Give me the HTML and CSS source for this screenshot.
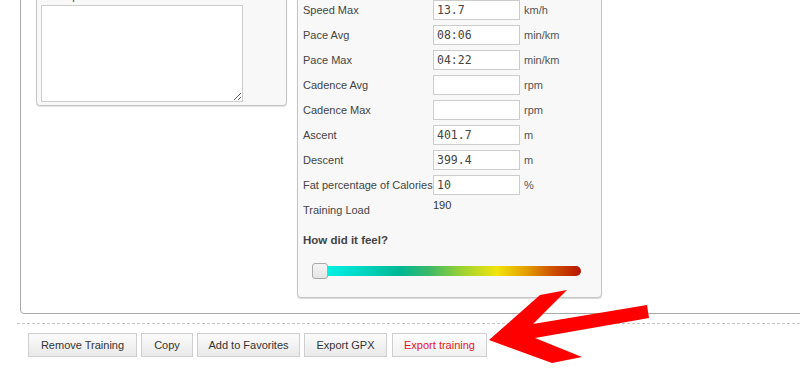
FILE: index.html
```html
<!DOCTYPE html>
<html>
<head>
<meta charset="utf-8">
<link rel="stylesheet" href="styles.css">
</head>
<body>
<div class="page">
  <div class="main">
    <div class="notes">
      <label class="notes-label">Description</label>
      <textarea class="notes-text"></textarea>
    </div>
    <div class="stats">
      <div class="row"><span class="lbl">Speed Max</span><input class="val" value="13.7"><span class="unit">km/h</span></div>
      <div class="row"><span class="lbl">Pace Avg</span><input class="val" value="08:06"><span class="unit">min/km</span></div>
      <div class="row"><span class="lbl">Pace Max</span><input class="val" value="04:22"><span class="unit">min/km</span></div>
      <div class="row"><span class="lbl">Cadence Avg</span><input class="val" value=""><span class="unit">rpm</span></div>
      <div class="row"><span class="lbl">Cadence Max</span><input class="val" value=""><span class="unit">rpm</span></div>
      <div class="row"><span class="lbl">Ascent</span><input class="val" value="401.7"><span class="unit">m</span></div>
      <div class="row"><span class="lbl">Descent</span><input class="val" value="399.4"><span class="unit">m</span></div>
      <div class="row"><span class="lbl">Fat percentage of Calories</span><input class="val" value="10"><span class="unit">%</span></div>
      <div class="row"><span class="lbl">Training Load</span><span class="static">190</span></div>
      <h4 class="feel">How did it feel?</h4>
      <div class="slider">
        <div class="track"></div>
        <div class="thumb"></div>
      </div>
    </div>
  </div>
  <div class="sep"></div>
  <div class="actions">
    <button class="btn btn-remove">Remove Training</button>
    <button class="btn btn-copy">Copy</button>
    <button class="btn btn-fav">Add to Favorites</button>
    <button class="btn btn-gpx">Export GPX</button>
    <button class="btn btn-red">Export training</button>
  </div>
</div>
<svg class="arrow" width="800" height="380" viewBox="0 0 800 380">
  <polygon fill="#ff0000" points="489,340 540,295 567,290 533,324 647,305 649,318 535,338 582,357 552,363"/>
</svg>
</body>
</html>
```

FILE: styles.css
```css
html, body {
  margin: 0;
  padding: 0;
  overflow: hidden;
  background: #fff;
  font-family: "Liberation Sans", Arial, sans-serif;
  font-size: 11px;
  color: #444;
}

.page {
  margin-top: -74px;
}

.main {
  margin-left: 20px;
  width: 820px;
  box-sizing: border-box;
  border: 1px solid #a9a9a9;
  border-radius: 4px;
  padding: 15px;
  display: flex;
  align-items: flex-start;
}

.notes {
  width: 251px;
  box-sizing: border-box;
  background: #f8f8f8;
  border: 1px solid #c4c4c4;
  border-radius: 4px;
  box-shadow: 0 1px 1px rgba(0,0,0,0.12);
  padding: 0 4px 3px 4px;
}

.notes-label {
  display: block;
  margin-top: 46px;
  margin-bottom: 2px;
  line-height: 14px;
  color: #444;
}

.notes-text {
  display: block;
  width: 202px;
  height: 97px;
  box-sizing: border-box;
  margin: 0;
  border: 1px solid #ccc;
  background: #fff;
  resize: both;
}

.stats {
  margin-left: 10px;
  width: 305px;
  box-sizing: border-box;
  background: #f8f8f8;
  border: 1px solid #c4c4c4;
  border-radius: 4px;
  box-shadow: 0 1px 1px rgba(0,0,0,0.15);
  padding: 57px 5px 18px 5px;
}

.row {
  display: flex;
  align-items: center;
  height: 20px;
  margin-bottom: 5px;
}

.lbl {
  width: 130px;
  flex: none;
  color: #444;
  white-space: nowrap;
}

.val {
  width: 87px;
  height: 20px;
  box-sizing: border-box;
  margin: 0;
  border: 1px solid #ccc;
  background: #fff;
  padding: 0 3px;
  font-family: "DejaVu Sans Mono", "Liberation Mono", monospace;
  font-size: 11.5px;
  color: #444;
  outline: none;
}

.unit {
  margin-left: 4px;
  color: #555;
}

.static {
  align-self: flex-start;
  margin-top: -1px;
  color: #333;
}

.feel {
  margin: 13px 0 0 0;
  font-size: 11.5px;
  line-height: 14px;
  font-weight: bold;
  color: #444;
}

.slider {
  position: relative;
  margin: 16px 0 0 9px;
  height: 16px;
}

.track {
  position: absolute;
  left: 6px;
  top: 3px;
  width: 263px;
  height: 10px;
  border-radius: 0 5px 5px 0;
  background: linear-gradient(to right, #00f7ea 0%, #00e0d0 12%, #00b894 31%, #3bb86a 42%, #9ed232 55%, #f2e40c 68%, #e4a000 79%, #d05a00 88%, #b81400 100%);
}

.thumb {
  position: absolute;
  left: 0;
  top: 0;
  width: 16px;
  height: 16px;
  box-sizing: border-box;
  border: 1px solid #aaa;
  border-radius: 3px;
  background: linear-gradient(#f4f4f4, #e4e4e4);
}

.sep {
  margin: 9px 0 0 17px;
  border-top: 1px dashed #c8c8c8;
}

.actions {
  display: flex;
  gap: 4px;
  margin: 9px 0 0 28px;
}

.btn {
  height: 24px;
  box-sizing: border-box;
  padding: 0;
  text-align: center;
  border: 1px solid #cfcfcf;
  border-radius: 0;
  background: linear-gradient(#fbfbfb, #e9e9e9);
  font-family: "Liberation Sans", Arial, sans-serif;
  font-size: 11px;
  color: #333;
}

.btn-remove { width: 109px; }
.btn-copy { width: 52px; }
.btn-fav { width: 103px; }
.btn-gpx { width: 83px; }

.btn-red {
  width: 95px;
  margin-left: 1px;
  color: #e8141c;
  background: linear-gradient(#fdfdfd, #f1f1f1);
}

.arrow {
  position: absolute;
  left: 0;
  top: 0;
  pointer-events: none;
}
```
